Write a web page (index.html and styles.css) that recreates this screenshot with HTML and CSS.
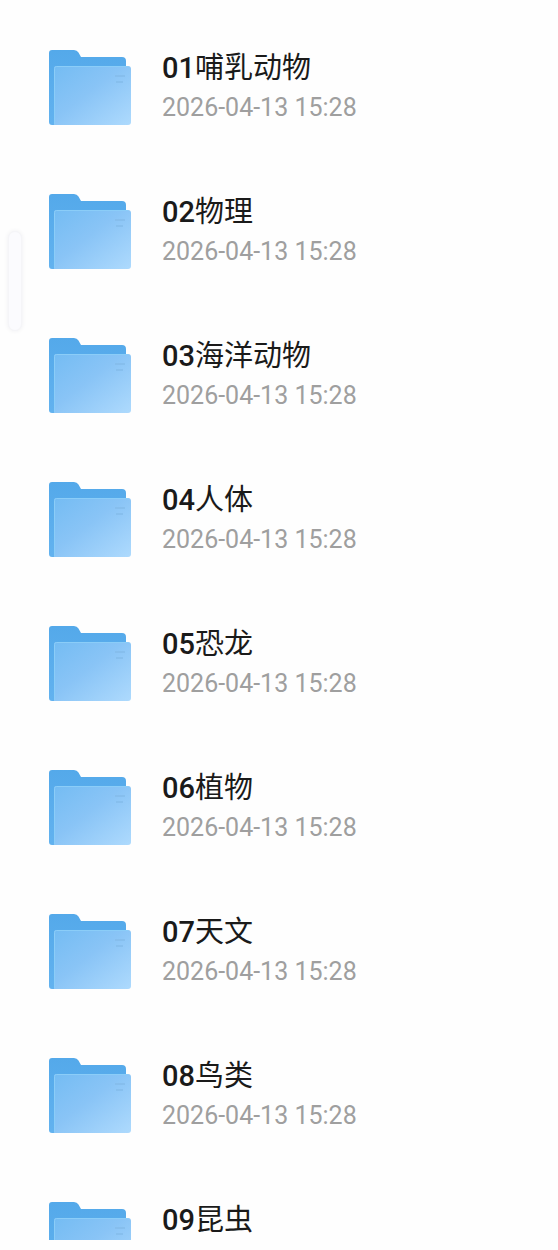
FILE: index.html
```html
<!DOCTYPE html>
<html lang="zh-CN">
<head>
<meta charset="utf-8">
<meta name="viewport" content="width=device-width, initial-scale=1">
<title>文件夹</title>
<link rel="stylesheet" href="styles.css">
</head>
<body>
<svg class="defs" width="0" height="0" aria-hidden="true">
  <defs>
    <linearGradient id="back" x1="0" y1="0" x2="0" y2="1">
      <stop offset="0" stop-color="#54a9ea"/>
      <stop offset="1" stop-color="#62b2ef"/>
    </linearGradient>
    <linearGradient id="front" x1="0" y1="0" x2="1" y2="1">
      <stop offset="0" stop-color="#74bcf3"/>
      <stop offset="0.45" stop-color="#89c4f6"/>
      <stop offset="1" stop-color="#aedafd"/>
    </linearGradient>
    <symbol id="folder" viewBox="0 0 82 76">
      <path fill="url(#back)" d="M3 0H25Q28 0 29.500 2.500L32 7H73Q77 7 77 11V75H3Q0 75 0 72V3Q0 0 3 0Z"/>
      <path fill="url(#front)" d="M7 16H79Q82 16 82 19V72Q82 75 79 75H5V18Q5 16 7 16Z"/>
      <path fill="none" stroke="#8bcdf8" d="M5.500 74V18.500Q5.500 16.500 7.500 16.500H79"/>
      <path fill="none" stroke="#84bcea" stroke-width="1.500" d="M66 26H76M67 32H74"/>
    </symbol>
  </defs>
</svg>
<main class="list">
  <a class="row" href="#"><svg class="icon" aria-hidden="true"><use href="#folder"/></svg><span class="info"><span class="name"><span class="number">01</span>哺乳动物</span><time class="date">2026-04-13 15:28</time></span></a>
  <a class="row" href="#"><svg class="icon" aria-hidden="true"><use href="#folder"/></svg><span class="info"><span class="name"><span class="number">02</span>物理</span><time class="date">2026-04-13 15:28</time></span></a>
  <a class="row" href="#"><svg class="icon" aria-hidden="true"><use href="#folder"/></svg><span class="info"><span class="name"><span class="number">03</span>海洋动物</span><time class="date">2026-04-13 15:28</time></span></a>
  <a class="row" href="#"><svg class="icon" aria-hidden="true"><use href="#folder"/></svg><span class="info"><span class="name"><span class="number">04</span>人体</span><time class="date">2026-04-13 15:28</time></span></a>
  <a class="row" href="#"><svg class="icon" aria-hidden="true"><use href="#folder"/></svg><span class="info"><span class="name"><span class="number">05</span>恐龙</span><time class="date">2026-04-13 15:28</time></span></a>
  <a class="row" href="#"><svg class="icon" aria-hidden="true"><use href="#folder"/></svg><span class="info"><span class="name"><span class="number">06</span>植物</span><time class="date">2026-04-13 15:28</time></span></a>
  <a class="row" href="#"><svg class="icon" aria-hidden="true"><use href="#folder"/></svg><span class="info"><span class="name"><span class="number">07</span>天文</span><time class="date">2026-04-13 15:28</time></span></a>
  <a class="row" href="#"><svg class="icon" aria-hidden="true"><use href="#folder"/></svg><span class="info"><span class="name"><span class="number">08</span>鸟类</span><time class="date">2026-04-13 15:28</time></span></a>
  <a class="row" href="#"><svg class="icon" aria-hidden="true"><use href="#folder"/></svg><span class="info"><span class="name"><span class="number">09</span>昆虫</span></span></a>
</main>
<div class="handle" aria-hidden="true"></div>
</body>
</html>
```
FILE: styles.css
```css
* {
  box-sizing: border-box;
}

body {
  margin: 0;
  height: 100vh;
  padding-bottom: 10px;
  background: #fefefe;
  font-family: Roboto, "Noto Sans CJK SC", sans-serif;
}

.defs {
  position: absolute;
}

.list {
  height: 100%;
  overflow: hidden;
  padding-top: 15px;
}

.row {
  display: flex;
  align-items: flex-start;
  gap: 31px;
  height: 144px;
  padding: 35px 32px 0 49px;
  color: inherit;
  text-decoration: none;
}

.icon {
  flex: none;
  width: 82px;
  height: 76px;
}

.info {
  display: flex;
  flex-direction: column;
  min-width: 0;
}

.name {
  font-size: 29px;
  line-height: 36px;
  color: #1a1a1a;
}

.number {
  font-weight: 500;
}

.date {
  margin-top: 6px;
  font-size: 25px;
  line-height: 32px;
  color: #9f9f9f;
}

.handle {
  position: absolute;
  top: 231px;
  left: 8px;
  width: 14px;
  height: 100px;
  border-radius: 7px;
  border: 1px solid #f5f5f8;
  background: #fbfbfe;
  box-shadow: 0 0 5px #efeff2;
}
```
